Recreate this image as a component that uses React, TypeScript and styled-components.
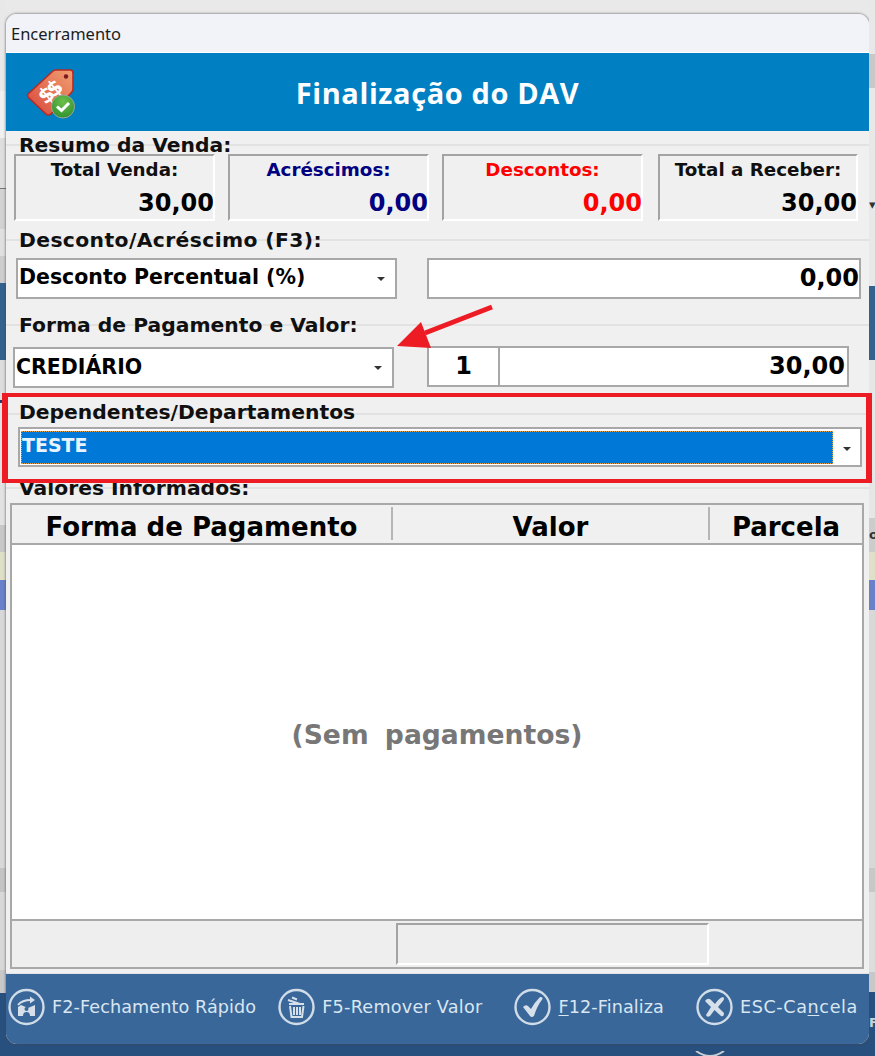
import React from "react";
import styled, { createGlobalStyle } from "styled-components";

const GlobalStyle = createGlobalStyle`
  html, body {
    margin: 0;
    padding: 0;
    background: #e8e8e8;
  }
  #root {
    width: 875px;
    height: 1056px;
    overflow: hidden;
  }
`;

const FONT = `"DejaVu Sans", "Liberation Sans", sans-serif`;

const Page = styled.div`
  position: relative;
  display: grid;
  grid-template-columns: 6px 863px 6px;
  width: 875px;
  height: 1056px;
  overflow: hidden;
  font-family: ${FONT};
  color: #000;
`;

const Gutter = styled.div`
  display: flex;
  flex-direction: column;
  overflow: hidden;
`;

const Strip = styled.div<{ $height: number; $color: string; $ink?: string }>`
  flex: none;
  height: ${(p) => p.$height}px;
  background: ${(p) => p.$color};
  font-size: 13px;
  font-weight: 700;
  line-height: ${(p) => p.$height}px;
  color: ${(p) => p.$ink ?? "#333"};
  white-space: nowrap;
`;

const Center = styled.div`
  display: flex;
  flex-direction: column;
  background: linear-gradient(#e9e9e9 0 50%, #28507f 50% 100%);
`;

const Spacer = styled.div<{ $height: number }>`
  flex: none;
  height: ${(p) => p.$height}px;
`;

const BottomShelf = styled.div`
  flex: none;
  height: 12px;
  padding-left: 686px;
`;

const Window = styled.div`
  flex: none;
  height: 1030px;
  display: flex;
  flex-direction: column;
  border-radius: 11px;
  overflow: hidden;
  background: #f0f0f0;
  box-shadow: 0 0 2px 1px rgba(70, 70, 70, 0.45);
`;

const TitleBar = styled.div`
  flex: none;
  height: 38px;
  padding-left: 5px;
  background: #f1f3f9;
  border-bottom: 1px solid #fff;
  font-family: "Noto Sans", sans-serif;
  font-size: 16.5px;
  line-height: 40px;
  color: #1c1c1c;
`;

const Header = styled.div`
  flex: none;
  height: 78px;
  display: grid;
  grid-template-columns: 90px 1fr 90px;
  align-items: center;
  background: #0080c3;
`;

const LogoSlot = styled.div`
  padding: 2px 0 0 20px;
  height: 52px;
`;

const Title = styled.div`
  text-align: center;
  font-family: "Open Sans", sans-serif;
  font-size: 29px;
  font-weight: 700;
  color: #fff;
  letter-spacing: 0.6px;
`;

const Body = styled.div`
  flex: 1;
  display: flex;
  flex-direction: column;
  min-height: 0;
`;

const GroupLabel = styled.div<{
  $top: number;
  $bottom: number;
  $line?: number;
  $tracking?: number;
}>`
  flex: none;
  height: 22px;
  margin-top: ${(p) => p.$top}px;
  margin-bottom: ${(p) => p.$bottom}px;
  padding-left: 13px;
  font-size: 20.3px;
  font-weight: 700;
  line-height: 23px;
  letter-spacing: ${(p) => p.$tracking ?? 0}px;
  color: #101010;
  white-space: nowrap;
  background: linear-gradient(#e2e2e2, #e2e2e2) no-repeat 0 ${(p) => p.$line ?? 10}px / 100% 2px;
`;

const StatRow = styled.div`
  flex: none;
  display: grid;
  grid-template-columns: repeat(4, 201px);
  column-gap: 13px;
  padding-left: 8px;
`;

const StatCard = styled.div`
  height: 67px;
  box-sizing: border-box;
  display: flex;
  flex-direction: column;
  border: 2px solid;
  border-color: #a3a3a3 #fff #fff #a3a3a3;

  &:last-child {
    margin: 0 -1px 0 2px;
  }
`;

const StatLabel = styled.div<{ $color: string }>`
  height: 29px;
  text-align: center;
  font-size: 18.3px;
  font-weight: 700;
  line-height: 28px;
  white-space: nowrap;
  color: ${(p) => p.$color};
`;

const StatValue = styled.div<{ $color: string }>`
  height: 34px;
  margin-right: -1px;
  text-align: right;
  font-size: 24px;
  font-weight: 700;
  line-height: 36px;
  color: ${(p) => p.$color};
`;

const FieldRow = styled.div<{ $indent: number; $gap: number }>`
  flex: none;
  display: flex;
  align-items: flex-end;
  column-gap: ${(p) => p.$gap}px;
  padding-left: ${(p) => p.$indent}px;
`;

const Select = styled.div<{ $width: number }>`
  flex: none;
  width: ${(p) => p.$width}px;
  height: 41px;
  box-sizing: border-box;
  display: flex;
  align-items: center;
  justify-content: space-between;
  padding: 0 10px 3px 1px;
  background: #fff;
  border: 2px solid #a8a8a8;
  font-size: 20.5px;
  font-weight: 700;
  white-space: nowrap;
`;

const Caret = styled.span`
  width: 0;
  height: 0;
  margin-top: 3px;
  border-left: 4px solid transparent;
  border-right: 4px solid transparent;
  border-top: 4px solid #333;
`;

const ValueBox = styled.div<{
  $width: number;
  $align?: string;
  $joined?: boolean;
  $inset?: number;
}>`
  flex: none;
  width: ${(p) => p.$width}px;
  height: 41px;
  box-sizing: border-box;
  padding: 0 ${(p) => p.$inset ?? 2}px 0 2px;
  background: #fff;
  border: 2px solid #a8a8a8;
  border-left-width: ${(p) => (p.$joined ? 0 : 2)}px;
  text-align: ${(p) => p.$align ?? "right"};
  font-size: 24px;
  font-weight: 700;
  line-height: 37px;
`;

const PayRow = styled.div`
  flex: none;
  display: flex;
  height: 42px;
  padding-left: 7px;
`;

const PaySelect = styled(Select)`
  align-self: flex-end;
  margin-right: 33px;
  padding-bottom: 2px;
`;

const Combo = styled.div`
  flex: none;
  width: 844px;
  height: 40px;
  margin-left: 12px;
  box-sizing: border-box;
  display: flex;
  align-items: center;
  padding: 2px 0 1px 1px;
  background: #fff;
  border: 2px solid #a8a8a8;
`;

const ComboValue = styled.div`
  flex: none;
  width: 812px;
  height: 33px;
  box-sizing: border-box;
  padding-left: 1px;
  background: #0078d7;
  outline: 1px dotted #e0a050;
  outline-offset: -1px;
  color: #e8f4ff;
  font-size: 19px;
  font-weight: 700;
  line-height: 28px;
`;

const ComboCaret = styled.div`
  flex: 1;
  display: flex;
  justify-content: center;
`;

const Grid = styled.div`
  flex: none;
  width: 854px;
  height: 466px;
  margin-left: 4px;
  box-sizing: border-box;
  display: flex;
  flex-direction: column;
  border: 2px solid #a8a8a8;
  border-bottom-width: 0;
`;

const HeaderRow = styled.div`
  flex: none;
  height: 40px;
  box-sizing: border-box;
  display: grid;
  grid-template-columns: 381px 317px 1fr;
  border-bottom: 2px solid #a8a8a8;
`;

const HeaderCell = styled.div<{ $divider?: boolean }>`
  height: 33px;
  margin-top: 2px;
  border-right: ${(p) => (p.$divider ? "2px solid #b5b5b5" : "0")};
  text-align: center;
  font-size: 26px;
  font-weight: 700;
  line-height: 40px;
  white-space: nowrap;
`;

const GridBody = styled.div`
  flex: none;
  height: 374px;
  box-sizing: border-box;
  display: flex;
  align-items: center;
  justify-content: center;
  padding-top: 4px;
  background: #fff;
  color: #777;
  font-size: 26.6px;
  font-weight: 700;
  word-spacing: 7px;
`;

const GridFooter = styled.div`
  flex: 1;
  display: grid;
  grid-template-columns: 384px 313px 1fr;
  border: solid #a8a8a8;
  border-width: 2px 0;
  padding: 1px 0;
  background: #eeeeee;
`;

const FooterCell = styled.div<{ $sunken?: boolean }>`
  margin: 1px 0;
  border: 2px solid;
  border-color: ${(p) =>
    p.$sunken ? "#a3a3a3 #fff #fff #a3a3a3" : "transparent"};
`;

const Actions = styled.div`
  flex: none;
  height: 71px;
  display: flex;
  align-items: center;
  padding: 0 0 4px 2px;
  box-sizing: border-box;
  background: #3a6799;
  border-top: 1px solid #dfe3e8;
`;

const ActionButton = styled.div<{ $left?: number; $tracking?: number }>`
  display: flex;
  align-items: center;
  column-gap: 7px;
  margin-left: ${(p) => p.$left ?? 0}px;
  font-size: 17.6px;
  color: #d8e6f2;
  white-space: nowrap;
  letter-spacing: ${(p) => p.$tracking ?? 0.1}px;
`;

const Key = styled.span`
  text-decoration: underline;
  text-underline-offset: 2px;
`;

const Highlight = styled.div`
  position: absolute;
  left: 2px;
  top: 393px;
  width: 870px;
  height: 90px;
  box-sizing: border-box;
  border: solid #ed1c24;
  border-width: 4px 6px;
  pointer-events: none;
`;

const ArrowMark = styled.svg`
  position: absolute;
  left: 390px;
  top: 300px;
  width: 110px;
  height: 52px;
`;

const leftStrips = [
  { h: 91, c: "#e8e8e8" },
  { h: 47, c: "#f0f0f0" },
  { h: 50, c: "#dedede" },
  { h: 1, c: "#777" },
  { h: 40, c: "#d2d2d2" },
  { h: 27, c: "#e0e0e0" },
  { h: 27, c: "#cdcdcd" },
  { h: 77, c: "#33628f" },
  { h: 40, c: "#dddddd" },
  { h: 3, c: "#1d3f70" },
  { h: 122, c: "#e2e2e2" },
  { h: 27, c: "#c8c8c8" },
  { h: 28, c: "#e0e0c8" },
  { h: 30, c: "#6a80c8" },
  { h: 258, c: "#d8d8d8" },
  { h: 24, c: "#c4c4c4" },
  { h: 78, c: "#d8d8d8" },
  { h: 23, c: "#c8c8c8" },
  { h: 63, c: "#28507f" },
];

const rightStrips = [
  { h: 54, c: "#e8e8e8" },
  { h: 34, c: "#c8c8c8" },
  { h: 110, c: "#e8e8e8" },
  { h: 14, c: "#e8e8e8", t: "▾" },
  { h: 74, c: "#e8e8e8" },
  { h: 74, c: "#33628f" },
  { h: 158, c: "#e6e6e6" },
  { h: 34, c: "#cccccc", t: "o" },
  { h: 28, c: "#e0e0c8" },
  { h: 30, c: "#6a80c8" },
  { h: 258, c: "#d8d8d8" },
  { h: 24, c: "#c8c8c8" },
  { h: 80, c: "#dddddd" },
  { h: 20, c: "#c8c8c8" },
  { h: 24, c: "#28507f" },
  { h: 14, c: "#28507f", t: "F", i: "#c8d0d8" },
  { h: 26, c: "#28507f" },
];

function TagLogo() {
  return (
    <svg width="52" height="54" viewBox="0 0 52 54">
      <defs>
        <linearGradient id="tagFill" x1="0" y1="1" x2="1" y2="0">
          <stop offset="0" stopColor="#d8443c" />
          <stop offset="1" stopColor="#f0a070" />
        </linearGradient>
        <radialGradient id="okFill" cx="0.5" cy="0.3" r="0.8">
          <stop offset="0" stopColor="#6cc04a" />
          <stop offset="1" stopColor="#2a8a2c" />
        </radialGradient>
      </defs>
      <path
        d="M2 27 L27 4 Q28 3 30 3 L44 3 Q47 3 47 6 L47 22 Q47 24 45 26 L25 47 Q22 49 20 47 L2 30 Q1 28 2 27 Z"
        fill="url(#tagFill)"
        stroke="#b62a24"
        strokeWidth="1.6"
      />
      <circle cx="40" cy="9.5" r="2.2" fill="#7a1a20" />
      <text
        x="23"
        y="33"
        fill="#fff"
        fontFamily={FONT}
        fontSize="21"
        fontWeight="700"
        textAnchor="middle"
        letterSpacing="-4"
        transform="rotate(-40 23 26)"
      >
        $$
      </text>
      <circle cx="37" cy="39.5" r="11.5" fill="url(#okFill)" stroke="#9aa89a" strokeWidth="1" />
      <path d="M31 39.5 L35.5 43.5 L43 36" fill="none" stroke="#fff" strokeWidth="3" />
    </svg>
  );
}

function RoundIcon({ children }: { children: React.ReactNode }) {
  return (
    <svg width="37" height="38" viewBox="0 0 37 38" fill="none">
      <circle cx="18.5" cy="19" r="17" stroke="#d0dce8" strokeWidth="2.4" />
      {children}
    </svg>
  );
}

function QuickIcon() {
  return (
    <RoundIcon>
      <path d="M10 19 L10 28 L27 28 L27 17 L20 20 L13 17 Z" fill="#d5e0ea" />
      <path d="M10 17 Q14 12 23 12" stroke="#d5e0ea" strokeWidth="2" />
      <path d="M22 8.5 L27 12 L22 15.5 Z" fill="#d5e0ea" />
      <circle cx="18.5" cy="21" r="2" fill="#3a6799" />
      <path d="M15 28 Q15 24 18.5 24 Q22 24 22 28 Z" fill="#3a6799" />
    </RoundIcon>
  );
}

function TrashIcon() {
  return (
    <RoundIcon>
      <path d="M10 12 L22 16 M14 9.5 L19 11.5" stroke="#d5e0ea" strokeWidth="2" />
      <path d="M11 16 H26 M12 18 L13.5 29 H24 L25.5 18" stroke="#d5e0ea" strokeWidth="2" />
      <path d="M16 19 V27 M19 19 V27 M22 19 V27" stroke="#d5e0ea" strokeWidth="2" />
    </RoundIcon>
  );
}

function CheckIcon() {
  return (
    <RoundIcon>
      <path
        d="M9 19 Q11.5 16 14 18 L17 21 Q20 15 26 9 Q29 8.5 28.5 11 Q23 18 20 28 Q17.5 30 16 28 Z"
        fill="#d5e0ea"
      />
    </RoundIcon>
  );
}

function CancelIcon() {
  return (
    <RoundIcon>
      <path
        d="M9 13 Q12 9 15 12 L19 16 Q23 10 27 9 Q29 10 27 13 L22 19 L28 25 Q28 29 25 28 L18.5 22 L14 28 Q11 30 10 27 L15 19 Z"
        fill="#d5e0ea"
      />
    </RoundIcon>
  );
}

export default function App() {
  return (
    <Page>
      <GlobalStyle />
      <Gutter>
        {leftStrips.map((s, i) => (
          <Strip key={i} $height={s.h} $color={s.c} />
        ))}
      </Gutter>
      <Center>
        <Spacer $height={14} />
        <Window>
          <TitleBar>Encerramento</TitleBar>
          <Header>
            <LogoSlot>
              <TagLogo />
            </LogoSlot>
            <Title>Finalização do DAV</Title>
            <div />
          </Header>
          <Body>
            <GroupLabel $top={3} $bottom={-2}>Resumo da Venda:</GroupLabel>
            <StatRow>
              <StatCard>
                <StatLabel $color="#101010">Total Venda:</StatLabel>
                <StatValue $color="#000">30,00</StatValue>
              </StatCard>
              <StatCard>
                <StatLabel $color="#000080">Acréscimos:</StatLabel>
                <StatValue $color="#000080">0,00</StatValue>
              </StatCard>
              <StatCard>
                <StatLabel $color="#ff0000">Descontos:</StatLabel>
                <StatValue $color="#ff0000">0,00</StatValue>
              </StatCard>
              <StatCard>
                <StatLabel $color="#101010">Total a Receber:</StatLabel>
                <StatValue $color="#000">30,00</StatValue>
              </StatCard>
            </StatRow>
            <GroupLabel $top={8} $bottom={7} $tracking={0.4}>Desconto/Acréscimo (F3):</GroupLabel>
            <FieldRow $indent={10} $gap={30}>
              <Select $width={381}>
                Desconto Percentual (%)
                <Caret />
              </Select>
              <ValueBox $width={434} $inset={0}>0,00</ValueBox>
            </FieldRow>
            <GroupLabel $top={15} $bottom={10}>Forma de Pagamento e Valor:</GroupLabel>
            <PayRow>
              <PaySelect $width={381}>
                CREDIÁRIO
                <Caret />
              </PaySelect>
              <ValueBox $width={73} $align="center">1</ValueBox>
              <ValueBox $width={349} $joined>30,00</ValueBox>
            </PayRow>
            <GroupLabel $top={13} $bottom={4} $line={12}>Dependentes/Departamentos</GroupLabel>
            <Combo>
              <ComboValue>TESTE</ComboValue>
              <ComboCaret>
                <Caret />
              </ComboCaret>
            </Combo>
            <GroupLabel $top={10} $bottom={4}>Valores Informados:</GroupLabel>
            <Grid>
              <HeaderRow>
                <HeaderCell $divider>Forma de Pagamento</HeaderCell>
                <HeaderCell $divider>Valor</HeaderCell>
                <HeaderCell>Parcela</HeaderCell>
              </HeaderRow>
              <GridBody>(Sem pagamentos)</GridBody>
              <GridFooter>
                <FooterCell />
                <FooterCell $sunken />
                <FooterCell />
              </GridFooter>
            </Grid>
          </Body>
          <Actions>
            <ActionButton>
              <QuickIcon />
              <span>F2-Fechamento Rápido</span>
            </ActionButton>
            <ActionButton $left={22} $tracking={0.25}>
              <TrashIcon />
              <span>F5-Remover Valor</span>
            </ActionButton>
            <ActionButton $left={32}>
              <CheckIcon />
              <span>
                <Key>F</Key>12-Finaliza
              </span>
            </ActionButton>
            <ActionButton $left={32} $tracking={0.6}>
              <CancelIcon />
              <span>
                ESC-Ca<Key>n</Key>cela
              </span>
            </ActionButton>
          </Actions>
        </Window>
        <BottomShelf>
          <svg width="36" height="8" viewBox="0 0 36 8" fill="none">
            <path d="M4 0 Q18 10 32 0" stroke="#c9ced6" strokeWidth="2" />
          </svg>
        </BottomShelf>
      </Center>
      <Gutter>
        {rightStrips.map((s, i) => (
          <Strip key={i} $height={s.h} $color={s.c} $ink={s.i}>
            {s.t}
          </Strip>
        ))}
      </Gutter>
      <ArrowMark viewBox="0 0 110 52">
        <path d="M102 7 L35 33" stroke="#ed1c24" strokeWidth="5" />
        <path d="M7 46 L31 22 L41 48 Z" fill="#ed1c24" />
      </ArrowMark>
      <Highlight />
    </Page>
  );
}
